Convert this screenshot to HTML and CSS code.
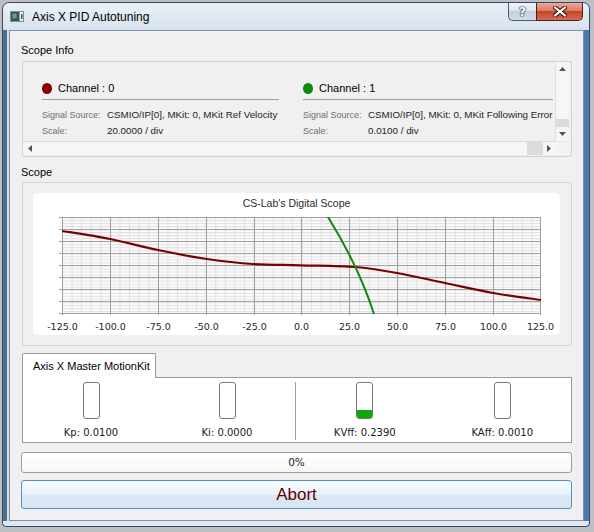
FILE: index.html
```html
<!DOCTYPE html>
<html>
<head>
<meta charset="utf-8">
<title>Axis X PID Autotuning</title>
<link rel="stylesheet" href="styles.css">
</head>
<body>
<div class="window">
  <div class="titlebar">
    <svg class="app-icon" width="14" height="11" viewBox="0 0 14 11">
      <rect x="0.5" y="0.5" width="13" height="10" fill="#f4f4f4" stroke="#858b93"/>
      <rect x="1" y="1" width="8.5" height="9" fill="#2f5e4e"/>
      <rect x="2.5" y="2.5" width="4" height="5" fill="#6f9a8a"/>
      <rect x="11" y="3" width="1.5" height="5" fill="#2f5e4e"/>
    </svg>
    <span class="title">Axis X PID Autotuning</span>
    <div class="caption">
      <div class="cbtn help">?</div>
      <div class="cbtn close">
        <svg width="14" height="11" viewBox="0 0 14 11">
          <path d="M2 1.5L12 9.5M12 1.5L2 9.5" stroke="#3b1a14" stroke-width="4.2" stroke-linecap="round"/>
          <path d="M2 1.5L12 9.5M12 1.5L2 9.5" stroke="#ffffff" stroke-width="2.2" stroke-linecap="round"/>
        </svg>
      </div>
    </div>
  </div>
  <div class="frame">
    <div class="client">
      <div class="group-label first">Scope Info</div>
      <div class="groupbox info">
        <div class="viewport">
          <div class="channel ch0">
            <div class="ch-head"><span class="dot red"></span>Channel : 0</div>
            <div class="ch-sep"></div>
            <div class="ch-row"><span class="k">Signal Source:</span><span class="v">CSMIO/IP[0], MKit: 0, MKit Ref Velocity</span></div>
            <div class="ch-row"><span class="k">Scale:</span><span class="v">20.0000 / div</span></div>
          </div>
          <div class="channel ch1">
            <div class="ch-head"><span class="dot green"></span>Channel : 1</div>
            <div class="ch-sep"></div>
            <div class="ch-row"><span class="k">Signal Source:</span><span class="v">CSMIO/IP[0], MKit: 0, MKit Following Error</span></div>
            <div class="ch-row"><span class="k">Scale:</span><span class="v">0.0100 / div</span></div>
          </div>
        </div>
        <div class="vscroll">
          <div class="sbtn up"><svg width="7" height="4" viewBox="0 0 7 4"><path d="M3.5 0L7 4H0Z" fill="#555"/></svg></div>
          <div class="vtrack"><div class="vthumb"></div></div>
          <div class="sbtn down"><svg width="7" height="4" viewBox="0 0 7 4"><path d="M0 0H7L3.5 4Z" fill="#555"/></svg></div>
        </div>
        <div class="hscroll">
          <div class="sbtn left"><svg width="4" height="7" viewBox="0 0 4 7"><path d="M0 3.5L4 0V7Z" fill="#555"/></svg></div>
          <div class="htrack"><div class="hthumb"></div></div>
          <div class="sbtn right"><svg width="4" height="7" viewBox="0 0 4 7"><path d="M0 0L4 3.5L0 7Z" fill="#555"/></svg></div>
        </div>
        <div class="corner"></div>
      </div>

      <div class="group-label">Scope</div>
      <div class="groupbox scope">
        <div class="chart">
          <svg width="527" height="142" viewBox="0 0 527 142">
            <defs>
              <pattern id="minor" patternUnits="userSpaceOnUse" x="29" y="24" width="9.58" height="3.03125">
                <path d="M0 0.5H9.58M0.5 0V3.04" stroke="#e0e0e0" stroke-width="1" fill="none"/>
              </pattern>
              <clipPath id="plotclip"><rect x="29" y="24" width="479" height="97"/></clipPath>
            </defs>
            <text class="ctitle" x="263.5" y="14" text-anchor="middle">CS-Lab's Digital Scope</text>
            <rect x="29" y="24" width="479" height="97" fill="#fbfbfb"/>
            <rect x="29" y="24" width="479" height="97" fill="url(#minor)"/>
            <g stroke="#a0a0a0" stroke-width="1">
              <path d="M29.5 24V122M77.5 24V122M125.5 24V122M173.5 24V122M221.5 24V122M268.5 24V122M316.5 24V122M364.5 24V122M412.5 24V122M460.5 24V122M507.5 24V122"/>
              <path d="M26 24.5H508M26 36.5H508M26 48.5H508M26 60.5H508M26 72.5H508M26 84.5H508M26 96.5H508M26 108.5H508M26 120.5H508"/>
            </g>
            <g clip-path="url(#plotclip)" fill="none" stroke-linecap="round" stroke-linejoin="round">
              <path d="M29,38 C37,39.3 61,42.8 77,46 C93,49.2 108.8,53.7 125,57 C141.2,60.3 158.2,63.7 174,66 C189.8,68.3 204.5,70 220,71 C235.5,72.05 250,71.8 267,72.3 C284,72.8 305.8,72.7 322,74 C338.2,75.3 349,77.3 364,80 C379,82.7 396,86.7 412,90 C428,93.3 444,97.2 460,100 C476,102.8 500,105.8 508,107" stroke="#7a0000" stroke-width="2.2"/>
              <path d="M295,24 Q326,74 341,121" stroke="#118811" stroke-width="2"/>
            </g>
            <g class="axis" text-anchor="middle">
              <text x="29.5" y="136.5">-125.0</text>
              <text x="77.5" y="136.5">-100.0</text>
              <text x="125.5" y="136.5">-75.0</text>
              <text x="173.5" y="136.5">-50.0</text>
              <text x="221.5" y="136.5">-25.0</text>
              <text x="268.5" y="136.5">0.0</text>
              <text x="316.5" y="136.5">25.0</text>
              <text x="364.5" y="136.5">50.0</text>
              <text x="412.5" y="136.5">75.0</text>
              <text x="460.5" y="136.5">100.0</text>
              <text x="507.5" y="136.5">125.0</text>
            </g>
          </svg>
        </div>
      </div>

      <div class="tabs"><div class="tab">Axis X Master MotionKit</div></div>
      <div class="pane">
        <div class="half left-half">
          <div class="gauge"><div class="bar"><div class="fill" style="height:0%"></div></div><div class="gval">Kp: 0.0100</div></div>
          <div class="gauge"><div class="bar"><div class="fill" style="height:0%"></div></div><div class="gval">Ki: 0.0000</div></div>
        </div>
        <div class="divider"></div>
        <div class="half right-half">
          <div class="gauge"><div class="bar"><div class="fill" style="height:23.9%"></div></div><div class="gval">KVff: 0.2390</div></div>
          <div class="gauge"><div class="bar"><div class="fill" style="height:0%"></div></div><div class="gval">KAff: 0.0010</div></div>
        </div>
      </div>

      <div class="progress">0%</div>
      <div class="abort">Abort</div>
    </div>
  </div>
</div>
</body>
</html>
```

FILE: styles.css
```css
* { box-sizing: border-box; }
html, body { margin: 0; padding: 0; }
body {
  width: 594px;
  height: 532px;
  overflow: hidden;
  background: #bcc0c5;
  font-family: "Liberation Sans", Arial, sans-serif;
  font-size: 11px;
  color: #000;
}

.window {
  width: 588px;
  height: 525px;
  margin: 2px 0 0 2px;
  border: 1px solid #3a4a5c;
  border-radius: 7px 7px 4px 4px;
  display: flex;
  flex-direction: column;
  overflow: hidden;
  background:
    linear-gradient(to top, #dfe7f0 0, #dfe7f0 5px, transparent 5px),
    linear-gradient(to right, #4e6d93 0, #4e6d93 4px, #d3dfeb 4px, #d3dfeb calc(100% - 5px), #4a79b3 calc(100% - 5px), #4a79b3 100%);
}

.titlebar {
  height: 27px;
  flex: none;
  display: flex;
  align-items: flex-start;
  background: linear-gradient(to bottom, #e9f0f8, #d8e3ef);
}
.app-icon { margin: 8px 0 0 7px; flex: none; }
.title { margin: 7px 0 0 8px; font-size: 12px; line-height: 14px; color: #000; }
.caption { margin-left: auto; margin-right: 6px; display: flex; height: 18px; }
.cbtn {
  height: 18px;
  display: flex;
  align-items: center;
  justify-content: center;
}
.cbtn.help {
  width: 28px;
  border: 1px solid #4c5d72;
  border-top: 0;
  border-right: 0;
  border-radius: 0 0 0 5px;
  background: linear-gradient(to bottom, #eef3f8 0%, #dde6f0 45%, #c3d0de 50%, #d2deeb 100%);
  font-family: "DejaVu Sans", sans-serif;
  font-weight: bold;
  font-size: 12px;
  color: #fff;
  text-shadow: 0 0 1px #1c2c40, 0 0 2px #1c2c40, 0 0 1px #1c2c40;
}
.cbtn.close {
  width: 47px;
  border: 1px solid #4c2018;
  border-top: 0;
  border-radius: 0 0 5px 0;
  background: linear-gradient(to bottom, #eaaa9b 0%, #dc7b66 45%, #c7452b 50%, #d66a50 100%);
}

.frame {
  flex: 1;
  display: flex;
  padding: 0 5px 5px 6px;
}
.client {
  flex: 1;
  border: 1px solid #7f91a8;
  background: #f0f0f0;
  padding: 0 11px;
  display: flex;
  flex-direction: column;
}

.group-label {
  height: 14px;
  line-height: 14px;
  margin-top: 8px;
  flex: none;
}
.group-label.first { margin-top: 12px; }

.groupbox {
  margin-left: 1px;
  border: 1px solid #d3d3d3;
  border-radius: 2px;
  flex: none;
}

/* Scope info */
.info {
  margin-top: 4px;
  height: 96px;
  display: grid;
  grid-template-columns: 532px 14px;
  grid-template-rows: 79px 14px;
  padding: 0 2px 1px 0;
}
.viewport {
  overflow: hidden;
  display: flex;
  gap: 24px;
  padding: 19px 0 0 19px;
}
.channel { flex: none; width: 237px; }
.channel.ch1 { width: 250px; }
.ch-head {
  height: 14px;
  line-height: 14px;
  display: flex;
  align-items: center;
  font-size: 11px;
  white-space: nowrap;
}
.dot {
  width: 10px;
  height: 11px;
  border-radius: 50%;
  margin-right: 6px;
  flex: none;
}
.dot.red { background: #870000; }
.dot.green { background: #0b8a0b; }
.ch-sep { margin-top: 4px; height: 1px; background: #a0a0a0; }
.ch-row {
  height: 14px;
  line-height: 14px;
  margin-top: 2px;
  display: flex;
  white-space: nowrap;
}
.ch-sep + .ch-row { margin-top: 8px; }
.ch-row .k { width: 65px; flex: none; font-size: 9px; color: #6e6e6e; }
.ch-row .v { font-size: 9.8px; color: #1e1e1e; }

.vscroll {
  display: flex;
  flex-direction: column;
  border-left: 1px solid #e0e0e0;
  background: #f6f6f6;
}
.sbtn { display: flex; align-items: center; justify-content: center; flex: none; }
.sbtn.up { height: 13px; }
.sbtn.down { height: 14px; }
.vtrack { flex: 1; display: flex; flex-direction: column; justify-content: flex-end; }
.vthumb { height: 8px; background: #dcdcdc; }

.hscroll {
  display: flex;
  border-top: 1px solid #dadada;
  background: #f6f6f6;
}
.sbtn.left { width: 14px; }
.sbtn.right { width: 12px; }
.htrack { flex: 1; display: flex; justify-content: flex-end; }
.hthumb { width: 16px; background: #dcdcdc; }
.corner { background: #f3f3f3; border-top: 1px solid #e6e6e6; }

/* Scope chart */
.scope {
  margin-top: 3px;
  height: 164px;
  padding: 10px 11px 10px 10px;
}
.chart {
  width: 527px;
  height: 142px;
  background: #fff;
  border-radius: 5px;
}
.chart svg { display: block; }
.ctitle { font-family: "Liberation Sans", Arial, sans-serif; font-size: 10.5px; fill: #2a2a2a; }
.axis text { font-family: "DejaVu Sans", sans-serif; font-size: 9.5px; fill: #1e1e1e; }

/* Tabs */
.tabs {
  margin-top: 7px;
  margin-left: 1px;
  height: 24px;
  display: flex;
  flex: none;
}
.tab {
  width: 134px;
  height: 25px;
  padding-left: 10px;
  border: 1px solid #9a9a9a;
  border-bottom: none;
  border-radius: 2px 2px 0 0;
  background: #fff;
  line-height: 24px;
  white-space: nowrap;
  position: relative;
  z-index: 1;
}
.pane {
  margin-left: 1px;
  height: 66px;
  border: 1px solid #9a9a9a;
  background: #fff;
  display: flex;
  flex: none;
}
.half { display: flex; }
.left-half { width: 272px; }
.right-half { flex: 1; }
.divider { width: 1px; background: #a0a0a0; margin: 4px 0 2px; }
.gauge {
  flex: 1;
  display: flex;
  flex-direction: column;
  align-items: center;
}
.bar {
  margin-top: 4px;
  width: 17px;
  height: 37px;
  border: 1px solid #777;
  border-radius: 3px;
  background: #fff;
  display: flex;
  flex-direction: column;
  justify-content: flex-end;
  overflow: hidden;
}
.fill { background: #0aa80a; }
.gval {
  margin-top: 7px;
  font-family: "DejaVu Sans", sans-serif;
  font-size: 10px;
  line-height: 14px;
  color: #1a1a1a;
  white-space: nowrap;
}

/* Progress and button */
.progress {
  margin-top: 9px;
  height: 21px;
  flex: none;
  border: 1px solid #9c9c9c;
  border-radius: 3px;
  background: linear-gradient(to bottom, #ffffff, #f7f7f7);
  text-align: center;
  line-height: 19px;
  font-family: "DejaVu Sans", sans-serif;
  font-size: 10.5px;
  color: #222;
}
.abort {
  margin-top: 7px;
  height: 29px;
  flex: none;
  border: 1px solid #5490c6;
  border-radius: 3px;
  background: linear-gradient(to bottom, #f5fafe 0%, #eaf3fb 48%, #dce9f5 52%, #d6e5f2 100%);
  color: #5e0000;
  font-size: 17px;
  line-height: 27px;
  text-align: center;
}
```
